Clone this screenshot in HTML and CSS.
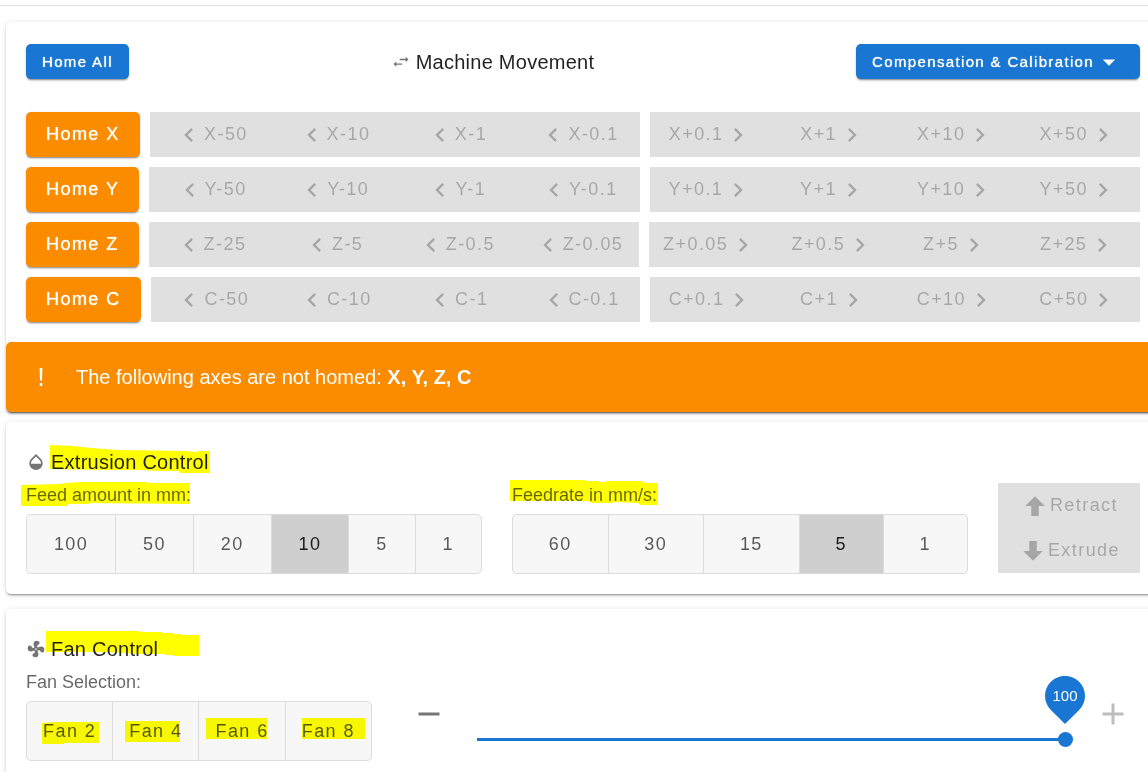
FILE: index.html
```html
<!DOCTYPE html>
<html lang="en">
<head>
<meta charset="utf-8">
<meta name="viewport" content="width=device-width, initial-scale=1">
<title>Machine Control</title>
<link rel="stylesheet" href="styles.css">
</head>
<body>
<svg class="sprite" aria-hidden="true">
  <symbol id="left" viewBox="0 0 24 24"><path d="M15.41,16.58L10.83,12L15.41,7.41L14,6L8,12L14,18L15.41,16.58Z"/></symbol>
  <symbol id="right" viewBox="0 0 24 24"><path d="M8.59,16.58L13.17,12L8.59,7.41L10,6L16,12L10,18L8.59,16.58Z"/></symbol>
</svg>
<main class="page">
  <section class="card">
    <div class="movement">
      <header class="toolbar">
        <button class="btn btn-primary" type="button">Home All</button>
        <h2 class="title"><svg class="icon-sm" viewBox="0 0 24 24"><path d="M21,9L17.6,5.8V8.2H10.5V9.9H17.6V12.2M3,14.5L6.4,11.3V13.7H13.5V15.4H6.4V17.7Z"/></svg><span>Machine Movement</span></h2>
        <button class="btn btn-primary" type="button">Compensation &amp; Calibration<svg class="icon-lg" viewBox="0 0 24 24"><path d="M7,10L12,15L17,10H7Z"/></svg></button>
      </header>
      <div class="axes">
        <div class="axis">
          <button class="btn-home" type="button">Home X</button>
          <div class="moves">
            <button class="move" type="button" disabled><svg class="chevron"><use href="#left"/></svg>X-50</button>
            <button class="move" type="button" disabled><svg class="chevron"><use href="#left"/></svg>X-10</button>
            <button class="move" type="button" disabled><svg class="chevron"><use href="#left"/></svg>X-1</button>
            <button class="move" type="button" disabled><svg class="chevron"><use href="#left"/></svg>X-0.1</button>
          </div>
          <div class="moves">
            <button class="move" type="button" disabled>X+0.1<svg class="chevron"><use href="#right"/></svg></button>
            <button class="move" type="button" disabled>X+1<svg class="chevron"><use href="#right"/></svg></button>
            <button class="move" type="button" disabled>X+10<svg class="chevron"><use href="#right"/></svg></button>
            <button class="move" type="button" disabled>X+50<svg class="chevron"><use href="#right"/></svg></button>
          </div>
        </div>
        <div class="axis">
          <button class="btn-home" type="button">Home Y</button>
          <div class="moves">
            <button class="move" type="button" disabled><svg class="chevron"><use href="#left"/></svg>Y-50</button>
            <button class="move" type="button" disabled><svg class="chevron"><use href="#left"/></svg>Y-10</button>
            <button class="move" type="button" disabled><svg class="chevron"><use href="#left"/></svg>Y-1</button>
            <button class="move" type="button" disabled><svg class="chevron"><use href="#left"/></svg>Y-0.1</button>
          </div>
          <div class="moves">
            <button class="move" type="button" disabled>Y+0.1<svg class="chevron"><use href="#right"/></svg></button>
            <button class="move" type="button" disabled>Y+1<svg class="chevron"><use href="#right"/></svg></button>
            <button class="move" type="button" disabled>Y+10<svg class="chevron"><use href="#right"/></svg></button>
            <button class="move" type="button" disabled>Y+50<svg class="chevron"><use href="#right"/></svg></button>
          </div>
        </div>
        <div class="axis">
          <button class="btn-home" type="button">Home Z</button>
          <div class="moves">
            <button class="move" type="button" disabled><svg class="chevron"><use href="#left"/></svg>Z-25</button>
            <button class="move" type="button" disabled><svg class="chevron"><use href="#left"/></svg>Z-5</button>
            <button class="move" type="button" disabled><svg class="chevron"><use href="#left"/></svg>Z-0.5</button>
            <button class="move" type="button" disabled><svg class="chevron"><use href="#left"/></svg>Z-0.05</button>
          </div>
          <div class="moves">
            <button class="move" type="button" disabled>Z+0.05<svg class="chevron"><use href="#right"/></svg></button>
            <button class="move" type="button" disabled>Z+0.5<svg class="chevron"><use href="#right"/></svg></button>
            <button class="move" type="button" disabled>Z+5<svg class="chevron"><use href="#right"/></svg></button>
            <button class="move" type="button" disabled>Z+25<svg class="chevron"><use href="#right"/></svg></button>
          </div>
        </div>
        <div class="axis">
          <button class="btn-home" type="button">Home C</button>
          <div class="moves">
            <button class="move" type="button" disabled><svg class="chevron"><use href="#left"/></svg>C-50</button>
            <button class="move" type="button" disabled><svg class="chevron"><use href="#left"/></svg>C-10</button>
            <button class="move" type="button" disabled><svg class="chevron"><use href="#left"/></svg>C-1</button>
            <button class="move" type="button" disabled><svg class="chevron"><use href="#left"/></svg>C-0.1</button>
          </div>
          <div class="moves">
            <button class="move" type="button" disabled>C+0.1<svg class="chevron"><use href="#right"/></svg></button>
            <button class="move" type="button" disabled>C+1<svg class="chevron"><use href="#right"/></svg></button>
            <button class="move" type="button" disabled>C+10<svg class="chevron"><use href="#right"/></svg></button>
            <button class="move" type="button" disabled>C+50<svg class="chevron"><use href="#right"/></svg></button>
          </div>
        </div>
      </div>
    </div>
    <div class="alert" role="alert">
      <svg class="icon-lg" viewBox="0 0 30 30"><path d="M13.6,6H16.4L16,18.5H14Z"/><rect x="13.7" y="21" width="2.6" height="3"/></svg>
      <p>The following axes are not homed: <strong>X, Y, Z, C</strong></p>
    </div>
  </section>

  <section class="card panel">
    <h2 class="title title-panel">
      <svg class="icon-sm" viewBox="0 0 24 24"><path d="M17.66,8L12,2.35L6.34,8C4.78,9.56 4,11.64 4,13.64C4,15.64 4.78,17.75 6.34,19.31C7.9,20.87 9.95,21.66 12,21.66C14.05,21.66 16.1,20.87 17.66,19.31C19.22,17.75 20,15.64 20,13.64C20,11.64 19.22,9.56 17.66,8M6,14C6,12 6.62,10.73 7.76,9.6L12,5.27L16.24,9.65C17.38,10.77 18,12 18,14H6Z"/></svg>
      <span class="marked">Extrusion Control<svg class="marker"><path d="M-1,3L22,4L40,6L67,8L134,9L144,10L148,9H159V31H128V29H109L89,28L54,28L-1,27Z"/></svg></span>
    </h2>
    <div class="extrusion">
      <div class="field">
        <span class="label marked" id="amount">Feed amount in mm:<svg class="marker"><path d="M-5,3L34,2L41,1L56,0H121V1H164V22L64,21L63,22H42V24H-5Z"/></svg></span>
        <div class="toggle" role="group" aria-labelledby="amount">
          <button type="button">100</button><button type="button">50</button><button type="button">20</button><button type="button" aria-pressed="true">10</button><button type="button">5</button><button type="button">1</button>
        </div>
      </div>
      <div class="field">
        <span class="label marked" id="rate">Feedrate in mm/s:<svg class="marker"><path d="M-2,-2H73V-1H87V0H94V-1H129L134,1H146V23H129L126,21L102,20V21H79V20L74,19H-2Z"/></svg></span>
        <div class="toggle" role="group" aria-labelledby="rate">
          <button type="button">60</button><button type="button">30</button><button type="button">15</button><button type="button" aria-pressed="true">5</button><button type="button">1</button>
        </div>
      </div>
      <div class="feed">
        <button class="move" type="button" disabled><svg class="icon-lg" viewBox="0 0 24 24"><path d="M15,20H9V12H4.16L12,4.16L19.84,12H15V20Z"/></svg>Retract</button>
        <button class="move" type="button" disabled><svg class="icon-lg" viewBox="0 0 24 24"><path d="M9,4H15V12H19.84L12,19.84L4.16,12H9V4Z"/></svg>Extrude</button>
      </div>
    </div>
  </section>

  <section class="card panel panel-fan">
    <h2 class="title title-panel">
      <svg class="icon-sm" viewBox="0 0 24 24"><path d="M12,11A1,1 0 0,0 11,12A1,1 0 0,0 12,13A1,1 0 0,0 13,12A1,1 0 0,0 12,11M12.5,2C17,2 17.11,5.57 14.75,6.75C13.76,7.24 13.32,8.29 13.13,9.22C13.61,9.42 14.03,9.73 14.35,10.13C18.05,8.13 22.03,8.92 22.03,12.5C22.03,17 18.46,17.1 17.28,14.73C16.78,13.74 15.72,13.3 14.79,13.11C14.59,13.59 14.28,14 13.88,14.34C15.87,18.03 15.08,22 11.5,22C7,22 6.91,18.42 9.27,17.24C10.25,16.75 10.69,15.71 10.89,14.79C10.4,14.59 9.97,14.27 9.65,13.87C5.96,15.85 2,15.07 2,11.5C2,7 5.56,6.89 6.74,9.26C7.24,10.25 8.29,10.68 9.22,10.87C9.41,10.39 9.73,9.97 10.14,9.65C8.15,5.96 8.94,2 12.5,2Z"/></svg>
      <span class="marked">Fan Control<svg class="marker"><path d="M-5,2H89V3H111V4H122V5H130V6H148V27H122V26H114V25H89L57,23H-5Z"/></svg></span>
    </h2>
    <div class="fans">
      <div class="field">
        <span class="label" id="fan">Fan Selection:</span>
        <div class="toggle" role="group" aria-labelledby="fan">
          <button class="marked" type="button">Fan 2<svg class="marker"><path d="M15,21L29,20H72V41H37V42H15Z"/></svg></button><button class="marked" type="button">Fan 4<svg class="marker"><path d="M12,19H67V40H12Z"/></svg></button><button class="marked" type="button">Fan 6<svg class="marker"><path d="M7,16H68V37H7Z"/></svg></button><button class="marked" type="button">Fan 8<svg class="marker"><path d="M16,16H79V37H16Z"/></svg></button>
        </div>
      </div>
      <div class="speed">
        <button class="step" type="button" aria-label="Decrease"><svg viewBox="0 0 24 24"><path d="M19,13H5V11H19V13Z"/></svg></button>
        <div class="slider">
          <input type="range" min="0" max="100" value="100" aria-label="Fan speed">
          <output class="bubble"><svg viewBox="0 0 40 48"><path d="M20,48L5.9,34.1A20,20 0 1,1 34.1,34.1Z"/></svg><span>100</span></output>
        </div>
        <button class="step" type="button" aria-label="Increase" disabled><svg viewBox="0 0 24 24"><path d="M19,13H13V19H11V13H5V11H11V5H13V11H19V13Z"/></svg></button>
      </div>
    </div>
  </section>
</main>
</body>
</html>
```
FILE: styles.css
```css
* {
  box-sizing: border-box;
}

body {
  margin: 0;
  height: 100vh;
  overflow: hidden;
  background: #fefefe;
  color: rgba(0, 0, 0, 0.87);
  font-family: "Liberation Sans", Arial, sans-serif;
}

button {
  margin: 0;
  padding: 0;
  border: 0;
  background: none;
  color: inherit;
  font-family: inherit;
}

svg {
  flex: none;
  fill: currentColor;
}

.sprite {
  display: none;
}

.page {
  margin-top: 5px;
  border-top: 1px solid #e0e0e0;
  padding: 16px 0 20px 6px;
}

/* Cards run past the right edge of the window. */
.card {
  margin-right: -12px;
  border-radius: 5px;
  background: #fff;
  box-shadow: 0 3px 1px -2px rgba(0, 0, 0, 0.2), 0 2px 2px 0 rgba(0, 0, 0, 0.14), 0 1px 5px 0 rgba(0, 0, 0, 0.12);
}

.movement {
  padding: 22px 20px 20px;
}

.toolbar {
  display: flex;
  justify-content: space-between;
  align-items: center;
  margin-bottom: 33px;
}

.btn {
  display: flex;
  align-items: center;
  height: 35px;
  padding: 0 16px;
  border-radius: 5px;
  font-size: 15px;
  letter-spacing: 0.09em;
  text-shadow: 0 0 1px currentColor;
  box-shadow: 0 2px 2px -1px rgba(0, 0, 0, 0.4), 0 1px 3px rgba(0, 0, 0, 0.15);
}

.btn-primary {
  background: #1976d2;
  color: #fff;
}

.title {
  display: flex;
  align-items: center;
  gap: 5px;
  margin: 0;
  font-size: 20px;
  font-weight: 400;
  letter-spacing: 0.0125em;
  line-height: 24px;
}

.icon-sm {
  width: 20px;
  height: 20px;
  color: rgba(0, 0, 0, 0.54);
}

.icon-lg {
  width: 30px;
  height: 30px;
}

.axes {
  display: grid;
  gap: 10px;
}

.axis {
  display: flex;
  gap: 10px;
}

.btn-home {
  height: 45px;
  padding: 0 20px;
  border-radius: 5px;
  background: #fb8c00;
  color: #fff;
  font-size: 18px;
  letter-spacing: 0.08em;
  text-shadow: 0 0 1px currentColor;
  box-shadow: 0 2px 2px -1px rgba(0, 0, 0, 0.4), 0 1px 3px rgba(0, 0, 0, 0.15);
}

.moves {
  flex: 1;
  display: grid;
  grid-template-columns: repeat(4, 1fr);
  background: #e0e0e0;
}

.move {
  display: flex;
  justify-content: center;
  align-items: center;
  height: 45px;
  color: rgba(0, 0, 0, 0.26);
  font-size: 18px;
  letter-spacing: 0.08em;
}

.chevron {
  width: 28px;
  height: 28px;
  margin: 0 1px;
}

.alert {
  display: flex;
  align-items: center;
  gap: 20px;
  height: 70px;
  padding: 0 20px;
  border-radius: 5px;
  background: #fb8c00;
  color: #fff;
  font-size: 20px;
  box-shadow: 0 3px 1px -2px rgba(0, 0, 0, 0.2), 0 2px 2px 0 rgba(0, 0, 0, 0.14);
}

.alert p {
  margin: 0;
}

.panel {
  margin-top: 10px;
  padding: 20px;
}

.panel-fan {
  margin-top: 15px;
}

.title-panel {
  line-height: 40px;
}

.extrusion {
  display: flex;
  align-items: center;
  gap: 30px;
}

.extrusion .field {
  flex: 1;
}

.label {
  display: inline-block;
  margin-bottom: 6px;
  color: rgba(0, 0, 0, 0.6);
  font-size: 18px;
  line-height: 26px;
  vertical-align: top;
}

.toggle {
  display: flex;
  height: 60px;
  border: 1px solid #dcdcdc;
  border-radius: 5px;
  background: #f7f7f7;
}

.toggle button {
  flex: 1 1 auto;
  padding: 0 16px;
  color: rgba(0, 0, 0, 0.65);
  font-size: 18px;
  letter-spacing: 0.08em;
}

.toggle button + button {
  border-left: 1px solid #dcdcdc;
}

.toggle button[aria-pressed="true"] {
  background: #cfcfcf;
  color: rgba(0, 0, 0, 0.87);
}

/* Highlighter strokes laid over labels. */
.marked {
  position: relative;
}

.marker {
  position: absolute;
  top: 0;
  left: 0;
  width: 1px;
  height: 1px;
  overflow: visible;
  fill: #ff0;
  mix-blend-mode: multiply;
  pointer-events: none;
}

.feed {
  display: grid;
  background: #e0e0e0;
}

.feed .move {
  padding: 0 20px;
}

.fans {
  display: flex;
  gap: 30px;
}

.speed {
  flex: 1;
  display: flex;
  align-items: flex-start;
  padding-top: 18px;
}

.step {
  display: grid;
  place-items: center;
  width: 54px;
  height: 54px;
  color: rgba(0, 0, 0, 0.54);
}

.step:disabled {
  color: rgba(0, 0, 0, 0.26);
}

.step svg {
  width: 36px;
  height: 36px;
}

.slider {
  position: relative;
  flex: 1;
  padding: 44px 13px 0;
}

.slider input {
  display: block;
  width: 100%;
  height: 16px;
  margin: 0;
  appearance: none;
  background: none;
}

.slider input::-webkit-slider-runnable-track {
  height: 3px;
  background: linear-gradient(#1976d2, #1976d2) 8px 0 / calc(100% - 16px) 100% no-repeat;
}

.slider input::-webkit-slider-thumb {
  appearance: none;
  width: 15px;
  height: 15px;
  margin-top: -6px;
  border-radius: 50%;
  background: #1976d2;
}

/* Value pin above the thumb. */
.bubble {
  position: absolute;
  top: -11px;
  right: 1px;
  display: grid;
  width: 40px;
  height: 48px;
  color: #fff;
  font-size: 15px;
  line-height: 40px;
  text-align: center;
}

.bubble svg,
.bubble span {
  grid-area: 1 / 1;
}

.bubble svg {
  color: #1976d2;
}
```
